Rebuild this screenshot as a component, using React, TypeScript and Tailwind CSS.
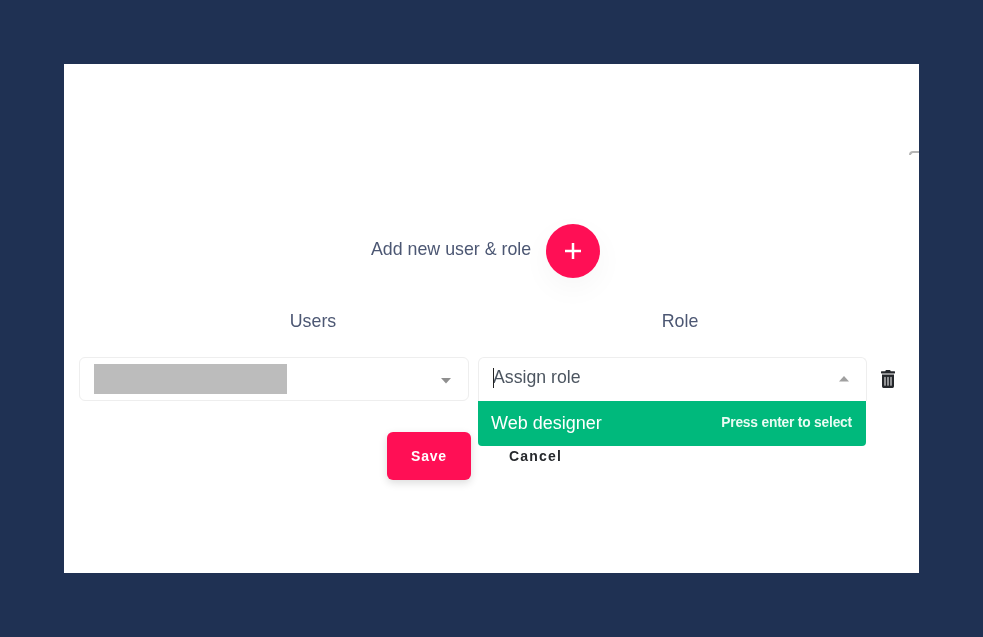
import React from "react";

const font = "font-['Liberation_Sans',Arial,sans-serif]";

const App: React.FC = () => {
  return (
    <div className={`h-[637px] w-[983px] overflow-hidden bg-[#1f3153] pl-[64px] pt-[64px] ${font}`}>
      <div className="relative h-[509px] w-[855px] bg-white pl-[15px] pt-[160px]">
        {/* clipped thing at the right edge */}
        <div className="absolute right-0 top-[87px] h-[4px] w-[10px] rounded-tl-full border-l-2 border-t-2 border-[#b5b5b5] blur-[0.6px]" />

        <div className="flex h-[54px] items-center pl-[292px]">
          <span className="mt-[-3px] w-[175px] whitespace-nowrap text-[17.800px] text-[#4c5773] blur-[0.4px]">
            Add new user &amp; role
          </span>
          <button className="flex h-[54px] w-[54px] items-center justify-center rounded-full bg-[#ff0f55] shadow-[0_10px_30px_rgba(0,0,0,0.04)]">
            <svg width="20" height="20" viewBox="0 0 20 20" fill="none" stroke="#ffffff" strokeWidth="2.500" className="blur-[0.3px]">
              <path d="M10 2v16M2 10h16" />
            </svg>
          </button>
        </div>

        <div className="mt-[32px] flex h-[22px] items-center text-[17.800px] text-[#4c5773] blur-[0.4px]">
          <div className="w-[468px] text-center">Users</div>
          <div className="w-[266px] text-center">Role</div>
        </div>

        <div className="mt-[25px] flex items-start">
          <div className="flex h-[44px] w-[390px] items-center justify-between rounded-[6px] border border-[#eeeeee] pl-[14px] pr-[16px]">
            <div className="h-[30px] w-[193px] bg-[#bcbcbc]" />
            <svg width="12" height="7" viewBox="0 0 12 7" className="mt-[2px] blur-[0.3px]">
              <path d="M1 1h10L6 6.500z" fill="#8f8f8f" />
            </svg>
          </div>

          <div className="relative ml-[9px] h-[44px] w-[389px]">
            <div className="flex h-[44px] items-center justify-between rounded-t-[6px] border border-b-0 border-[#eeeeee] pl-[14px] pr-[16px]">
              <span className="relative mt-[-3px] text-[17.700px] leading-none text-[#4c5560] blur-[0.3px]">
                <span className="absolute left-0 top-[-1px] h-[20px] w-px bg-[#222222]" />
                Assign role
              </span>
              <svg width="12" height="7" viewBox="0 0 12 7" className="mt-[-3px] blur-[0.3px]">
                <path d="M1 6.500h10L6 1z" fill="#a0a0a0" />
              </svg>
            </div>
            <div className="absolute left-0 top-[44px] z-10 flex h-[45px] w-[388px] items-center justify-between rounded-b-[4px] bg-[#00b97c] pl-[13px] pr-[14px] text-white">
              <span className="text-[18px] blur-[0.4px]">Web designer</span>
              <span className="text-[13.800px] font-bold tracking-[-0.2px] text-[#e8fbf3] blur-[0.4px]">Press enter to select</span>
            </div>
          </div>

          <button className="ml-[13px] mt-[12px] flex h-[20px] w-[16px] items-center justify-center">
            <svg width="14" height="18" viewBox="0 0 448 512" preserveAspectRatio="none" fill="#24272b" className="blur-[0.2px]">
              <path d="M32 464a48 48 0 0 0 48 48h288a48 48 0 0 0 48-48V128H32zm272-256a16 16 0 0 1 32 0v224a16 16 0 0 1-32 0zm-96 0a16 16 0 0 1 32 0v224a16 16 0 0 1-32 0zm-96 0a16 16 0 0 1 32 0v224a16 16 0 0 1-32 0zM432 32H312l-9.400-18.700A24 24 0 0 0 281.100 0H166.800a23.700 23.700 0 0 0-21.400 13.300L136 32H16A16 16 0 0 0 0 48v32a16 16 0 0 0 16 16h416a16 16 0 0 0 16-16V48a16 16 0 0 0-16-16z" />
            </svg>
          </button>
        </div>

        <div className="mt-[31px] flex items-center pl-[308px]">
          <button className="flex h-[48px] w-[84px] items-center justify-center rounded-[6px] bg-[#ff0f55] text-[14px] font-bold tracking-[0.8px] text-white shadow-[0_3px_8px_rgba(0,0,0,0.14)]">
            <span className="blur-[0.4px]">Save</span>
          </button>
          <button className="ml-[38px] text-[14px] font-bold tracking-[1.200px] text-[#26282c] blur-[0.3px]">
            Cancel
          </button>
        </div>
      </div>
    </div>
  );
};

export default App;
